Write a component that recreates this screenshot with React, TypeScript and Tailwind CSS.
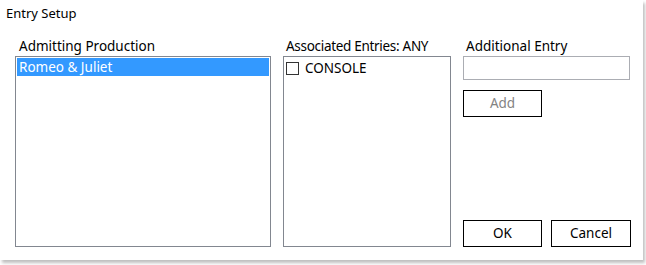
import React from "react";

export default function App() {
  const font = { fontFamily: '"Noto Sans", "Segoe UI", sans-serif' };
  return (
    <div className="w-[646px] h-[265px] bg-white" style={font}>
      <div className="w-[643px] h-[260px] bg-white shadow-[2px_3px_3px_rgba(0,0,0,0.25)] flex flex-col">
        <div className="h-[28px] pl-[6px] pt-[5px] text-[13px] leading-[16px] text-black">Entry Setup</div>
        <div className="flex pl-[15px] pt-[8px]">
          <div className="w-[256px] flex flex-col">
            <div className="pl-[4px] h-[20px] text-[13.5px] leading-[20px] text-black whitespace-nowrap">Admitting Production</div>
            <div className="h-[191px] border border-[#828790] p-[1px] bg-white">
              <div className="h-[18px] bg-[#3399ff] text-white text-[13.5px] leading-[18px] pl-[2px]">Romeo &amp; Juliet</div>
            </div>
          </div>
          <div className="w-[168px] ml-[12px] flex flex-col">
            <div className="pl-[3px] h-[20px] text-[13.5px] leading-[20px] text-black whitespace-nowrap tracking-[-0.3px]">Associated Entries: ANY</div>
            <div className="h-[191px] border border-[#828790] bg-white pt-[4px] pl-[2px]">
              <div className="flex items-center h-[14px] gap-[6px] text-[13.5px]">
                <div className="w-[13px] h-[13px] border border-[#333] bg-white" />
                <span className="leading-[14px] text-black">CONSOLE</span>
              </div>
            </div>
          </div>
          <div className="w-[168px] ml-[12px] flex flex-col">
            <div className="pl-[3px] h-[20px] text-[13.5px] leading-[20px] text-black whitespace-nowrap">Additional Entry</div>
            <div className="h-[24px] w-[167px] border border-[#abadb3] bg-white" />
            <button className="mt-[10px] w-[79px] h-[27px] border border-black bg-white text-[13.5px] text-[#838383]">Add</button>
            <div className="flex-1" />
            <div className="flex gap-[9px]">
              <button className="w-[79px] h-[27px] border border-black bg-white text-[13.5px] text-black">OK</button>
              <button className="w-[80px] h-[27px] border border-black bg-white text-[13.5px] text-black">Cancel</button>
            </div>
          </div>
        </div>
      </div>
    </div>
  );
}
